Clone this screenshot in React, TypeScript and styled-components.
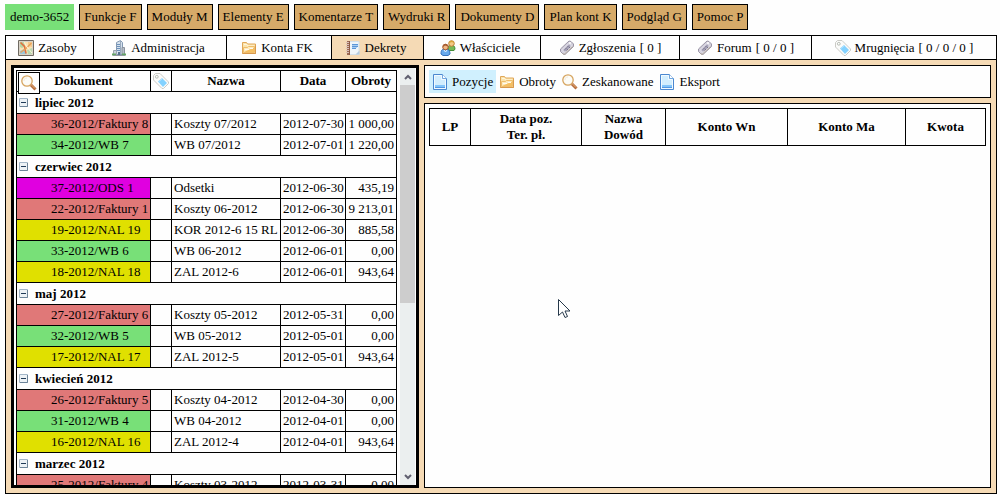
import React from 'react';
import styled, { createGlobalStyle, css } from 'styled-components';

const color = {
  sand: '#f5dab5',
  tan: '#d6aa69',
  green: '#78e078',
  red: '#e07878',
  yellow: '#e0e000',
  magenta: '#e000e0',
  active: '#d0f0fe',
};

const Global = createGlobalStyle`
  *, *::before, *::after { box-sizing: border-box; }
  body {
    margin: 0;
    background: #fefefe;
    color: #000;
    font: 13px/16px "Liberation Serif", "Times New Roman", serif;
  }
  button { font: inherit; color: inherit; cursor: pointer; }
  table { border-collapse: collapse; table-layout: fixed; font: inherit; }
`;

const Page = styled.div`
  position: relative;
  display: flex;
  flex-direction: column;
  gap: 5px;
  height: 100vh;
  padding: 4px 3px 6px 5px;
`;

const MenuBar = styled.nav`
  display: flex;
  flex: none;
  gap: 5px;
`;

const MenuButton = styled.button<{ $account?: boolean }>`
  height: 26px;
  padding: 0 4px;
  white-space: nowrap;
  border: 1px solid ${(p) => (p.$account ? color.green : '#000')};
  background: ${(p) => (p.$account ? color.green : color.tan)};
`;

const Workspace = styled.main`
  display: flex;
  flex: 1;
  flex-direction: column;
  min-height: 0;
  border: 1px solid #000;
  background: ${color.sand};
`;

const TabBar = styled.nav`
  display: grid;
  flex: none;
  grid-template-columns: 88fr 133fr 105fr 92fr 117fr 139fr 132fr 184fr;
  border-bottom: 1px solid #000;
`;

const Tab = styled.button<{ $active?: boolean; $counted?: boolean }>`
  display: flex;
  align-items: center;
  justify-content: center;
  gap: 4px;
  height: 23px;
  padding: 0 ${(p) => (p.$counted ? 0 : 4)}px 0 0;
  border: 0;
  border-right: 1px solid #000;
  white-space: nowrap;
  background: ${(p) => (p.$active ? color.sand : '#fefefe')};
  &:last-child { border-right: 0; }
`;

const Panels = styled.div`
  display: flex;
  flex: 1;
  gap: 5px;
  min-height: 0;
  padding: 5px;
`;

const DocumentPanel = styled.section`
  display: flex;
  flex: none;
  gap: 3px;
  overflow: hidden;
  padding: 0 1px 0 2px;
  border: 3px solid #000;
  background: #fefefe;
`;

const DocumentList = styled.div`
  overflow: hidden;
  padding-top: 2px;
`;

const DocumentTable = styled.table`
  width: 381px;
  border: 1px solid #000;
`;

const cell = css`
  height: 21px;
  padding: 0 2px;
  border: 1px solid #000;
  white-space: nowrap;
`;

const HeadCell = styled.th`
  ${cell}
  position: relative;
  padding: 0;
  svg { display: block; margin: 0 auto; }
`;

const GroupCell = styled.th`
  ${cell}
  height: 22px;
  text-align: left;
`;

const GroupToggle = styled.button`
  display: flex;
  align-items: center;
  gap: 7px;
  padding: 0;
  border: 0;
  background: none;
  font-weight: bold;
`;

const Cell = styled.td<{ $right?: boolean }>`
  ${cell}
  text-align: ${(p) => (p.$right ? 'right' : 'left')};
`;

const DocumentCell = styled.td<{ $fill: string }>`
  ${cell}
  padding: 0 0 0 34px;
  background: ${(p) => p.$fill};
`;

const SearchButton = styled.button`
  position: absolute;
  top: 1px;
  left: 1px;
  z-index: 1;
  width: 22px;
  height: 22px;
  padding: 0;
  border: 1px solid #000;
  background: #fefefe;
`;

const Scrollbar = styled.div`
  display: flex;
  flex-direction: column;
  width: 15px;
  background: #ebefef;
`;

const ScrollButton = styled.button`
  display: flex;
  flex: none;
  align-items: center;
  justify-content: center;
  height: 17px;
  padding: 0;
  border: 0;
  background: none;
`;

const ScrollTrack = styled.div`
  flex: 1;
`;

const ScrollThumb = styled.div`
  height: 57%;
  background: #cdcdcd;
`;

const DetailColumn = styled.div`
  display: flex;
  flex: 1;
  flex-direction: column;
  gap: 5px;
  min-width: 0;
`;

const Box = styled.section<{ $grow?: boolean }>`
  flex: ${(p) => (p.$grow ? '1' : 'none')};
  min-height: 0;
  padding: 4px;
  border: 1px solid #000;
  background: #fefefe;
`;

const Tools = styled.div`
  display: flex;
`;

const ToolButton = styled.button<{ $active?: boolean }>`
  display: flex;
  align-items: center;
  gap: 4px;
  height: 23px;
  padding: 0 3px;
  border: 0;
  background: ${(p) => (p.$active ? color.active : 'none')};
`;

const PositionTable = styled.table`
  width: 100%;
`;

const PositionHead = styled.th`
  height: 37px;
  padding: 0;
  border: 1px solid #000;
`;

const Pointer = styled.svg`
  position: absolute;
  top: 298px;
  left: 558px;
  pointer-events: none;
`;

const Svg = ({ children }: { children: React.ReactNode }) => (
  <svg width="16" height="16" viewBox="0 0 16 16" fill="none" aria-hidden="true">
    {children}
  </svg>
);

const MapIcon = () => (
  <Svg>
    <path d="M.5.5h15v15H.5z" fill="#fbe3b4" stroke="#6f6a62" />
    <path d="M1.500 1.500h13v13h-13z" stroke="#d8d2c6" />
    <path d="M2 2h4l1 4-3 2-2-1z" fill="#b5d6a6" />
    <path d="M10 2h4v5l-4-1z" fill="#f6c98c" />
    <path d="M2 11l4-2 3 5H2z" fill="#9cc8dc" />
    <path d="M9 10l5-2v6h-4z" fill="#b9d9b0" />
    <path d="M2.500 2.500l4 4 1.500 7" stroke="#e0703c" strokeWidth="1.600" />
    <path d="M13.500 3L8 8.500l-5.500 4" stroke="#e8a25a" strokeWidth="1.400" />
    <path d="M6 2l3 5 5 6" stroke="#fff4d6" />
  </Svg>
);

const BuildingIcon = () => (
  <Svg>
    <path d="M5.500 14.500V2.500l4-2 2 2v12z" fill="#d5e1ed" stroke="#8399b3" />
    <path d="M9.500 1v13" stroke="#9aaabd" />
    <path d="M6 4.500h3M6 6.500h3M6 8.500h3M6 10.500h3" stroke="#6c91bb" />
    <path d="M11 7.500h2.500v7H11z" fill="#b5bdc7" stroke="#8b929e" />
    <path d="M2.500 10.500h3v4h-3z" fill="#cad2dc" stroke="#9ba5af" />
    <path d="M7 12h2v3H7z" fill="#57718e" />
    <path d="M1 14.500h4M11 14.500h4" stroke="#64a565" strokeWidth="2" />
    <path d="M2 15.500h12" stroke="#929ba0" />
  </Svg>
);

const FolderIcon = () => (
  <Svg>
    <path d="M1.500 13.500v-11h4l1 1.500h8v9.500z" fill="#fbe4ad" stroke="#e0a758" />
    <path d="M3 4.500h3l1 1.500h6" stroke="#fff6dc" />
    <path d="M2.500 12.500v-5h4l1-1h6v6z" fill="#fdeabd" stroke="#efbd6c" />
    <path d="M3 12l10-4.500V12z" fill="#f5bf62" />
    <path d="M4 9.500h4M9 8.500h3" stroke="#fffaf0" />
    <path d="M1.500 13.500h13v-8" stroke="#d9994c" />
  </Svg>
);

const NotebookIcon = () => (
  <Svg>
    <path d="M4 1.500h10v13H4z" fill="#eef5fa" stroke="#d3e0ea" />
    <path d="M2 1h2v14H2z" fill="#9c6a56" />
    <path d="M1 2.500h3M1 4.500h3M1 6.500h3M1 8.500h3M1 10.500h3M1 12.500h3" stroke="#d9c2b8" />
    <path d="M4.500 1v14" stroke="#8f5c48" />
    <path d="M7 4.500h6M7 6.500h6M7 8.500h4" stroke="#5b96d8" />
    <path d="M7 5.500h6M7 7.500h5" stroke="#a9cdf0" />
    <path d="M10.500 14.500l4-4v4z" fill="#b4cbe0" />
  </Svg>
);

const PeopleIcon = () => (
  <Svg>
    <path d="M8 9c0-3 1-4 3-4s4 1 4 4l-1 1.500H9z" fill="#77b957" stroke="#438c37" />
    <circle cx="11.500" cy="3.500" r="2.800" fill="#f4c986" stroke="#be8035" />
    <path d="M9 3c0-3 5-3 5 0l-2-1z" fill="#d8a537" />
    <path d="M1 14c0-4 1-5 4.500-5S10 11 10 14l-2 1.500H3z" fill="#68a9ec" stroke="#3671bd" />
    <circle cx="5.500" cy="7" r="2.800" fill="#f0b783" stroke="#a95f31" />
    <path d="M3 7c-.5-4 5-4 5-.5L5 5.500z" fill="#a35a31" />
    <path d="M4 10l1.500 2L7 10" stroke="#e3f1ff" />
  </Svg>
);

const TicketIcon = () => (
  <Svg>
    <path d="M1.500 9l8.500-8 2 .5 2.500 2.500v2.500l-8.500 8-2-.5-2.500-2.500z" fill="#d3d0dc" stroke="#9a95a6" />
    <path d="M3.500 10l6.500-6.500 2.500 2.500L6 12.500z" fill="#aaa6ba" stroke="#e9e8f0" />
    <path d="M6 9.500l4-4M7.500 10.500l4-4" stroke="#75718a" strokeDasharray="2 1" />
    <path d="M3.500 13.500l1.500 1 8.500-8" stroke="#b9aea0" />
    <circle cx="11" cy="3" r="1" fill="#fff" />
  </Svg>
);

const TagIcon = () => (
  <Svg>
    <path d="M.5 2.500l2-2h4.500l8.500 8.500v1.500l-5 5H9L.5 7z" fill="#fbfbfa" stroke="#cbcbc6" />
    <circle cx="3.800" cy="3.800" r="1.400" fill="#fff" stroke="#b5bab2" />
    <path d="M5 8.500l4-3.500 5 5-4 4z" fill="#84d2ff" />
    <path d="M6 8.500l3-2.500" stroke="#b4e4ff" />
  </Svg>
);

const SearchIcon = () => (
  <Svg>
    <circle cx="6" cy="6" r="5.200" fill="#fcfcf8" stroke="#d6a45f" strokeWidth="1.300" />
    <path d="M3 6c0-2 1-3 3-3" stroke="#f2e8d8" />
    <path d="M10 10l4.500 4.500" stroke="#b56b3d" strokeWidth="3" />
    <path d="M10.500 10l3.500 3.500" stroke="#e7b578" />
  </Svg>
);

const PageIcon = () => (
  <Svg>
    <path d="M1.500.5h9l4 4v11h-13z" fill="#d2eefe" stroke="#4b88d0" />
    <path d="M2.500 1.500h7v4h4v9h-11z" stroke="#f1faff" />
    <path d="M10.500.5v4h4" fill="#fff" stroke="#73a7df" />
    <path d="M3 11h10v2H3z" fill="#83c5fb" />
    <path d="M3 13.500h10" stroke="#5498e2" />
  </Svg>
);

const CollapseIcon = () => (
  <svg width="9" height="9" viewBox="0 0 9 9" fill="none" aria-hidden="true">
    <path d="M.5.5h8v8h-8z" fill="#edf2f6" stroke="#a3b6c8" />
    <path d="M8.500 1v7.500H1" stroke="#6d8499" />
    <path d="M2 4.500h5" stroke="#203b58" />
  </svg>
);

const Chevron = ({ down }: { down?: boolean }) => (
  <svg width="8" height="6" viewBox="0 0 8 6" fill="none" aria-hidden="true">
    <path d={down ? 'M1 1l3 3 3-3' : 'M1 5l3-3 3 3'} stroke="#606070" strokeWidth="2" />
  </svg>
);

const menu = [
  'Funkcje F', 'Moduły M', 'Elementy E', 'Komentarze T', 'Wydruki R',
  'Dokumenty D', 'Plan kont K', 'Podgląd G', 'Pomoc P',
];

const tabs = [
  { label: 'Zasoby', Icon: MapIcon },
  { label: 'Administracja', Icon: BuildingIcon },
  { label: 'Konta FK', Icon: FolderIcon },
  { label: 'Dekrety', Icon: NotebookIcon, active: true },
  { label: 'Właściciele', Icon: PeopleIcon },
  { label: 'Zgłoszenia', Icon: TicketIcon, count: '[ 0 ]' },
  { label: 'Forum', Icon: TicketIcon, count: '[ 0 / 0 ]' },
  { label: 'Mrugnięcia', Icon: TagIcon, count: '[ 0 / 0 / 0 ]' },
];

const tools = [
  { label: 'Pozycje', Icon: PageIcon, active: true },
  { label: 'Obroty', Icon: FolderIcon },
  { label: 'Zeskanowane', Icon: SearchIcon },
  { label: 'Eksport', Icon: PageIcon },
];

type Row = [string, string, string, string];

const groups: { month: string; rows: Row[] }[] = [
  {
    month: 'lipiec 2012',
    rows: [
      ['36-2012/Faktury 8', 'Koszty 07/2012', '2012-07-30', '1 000,00'],
      ['34-2012/WB 7', 'WB 07/2012', '2012-07-01', '1 220,00'],
    ],
  },
  {
    month: 'czerwiec 2012',
    rows: [
      ['37-2012/ODS 1', 'Odsetki', '2012-06-30', '435,19'],
      ['22-2012/Faktury 1', 'Koszty 06-2012', '2012-06-30', '9 213,01'],
      ['19-2012/NAL 19', 'KOR 2012-6 15 RL', '2012-06-30', '885,58'],
      ['33-2012/WB 6', 'WB 06-2012', '2012-06-01', '0,00'],
      ['18-2012/NAL 18', 'ZAL 2012-6', '2012-06-01', '943,64'],
    ],
  },
  {
    month: 'maj 2012',
    rows: [
      ['27-2012/Faktury 6', 'Koszty 05-2012', '2012-05-31', '0,00'],
      ['32-2012/WB 5', 'WB 05-2012', '2012-05-01', '0,00'],
      ['17-2012/NAL 17', 'ZAL 2012-5', '2012-05-01', '943,64'],
    ],
  },
  {
    month: 'kwiecień 2012',
    rows: [
      ['26-2012/Faktury 5', 'Koszty 04-2012', '2012-04-30', '0,00'],
      ['31-2012/WB 4', 'WB 04-2012', '2012-04-01', '0,00'],
      ['16-2012/NAL 16', 'ZAL 2012-4', '2012-04-01', '943,64'],
    ],
  },
  {
    month: 'marzec 2012',
    rows: [['25-2012/Faktury 4', 'Koszty 03-2012', '2012-03-31', '0,00']],
  },
];

const fillFor = (doc: string) => {
  if (doc.includes('Faktury')) return color.red;
  if (doc.includes('WB')) return color.green;
  if (doc.includes('NAL')) return color.yellow;
  return color.magenta;
};

export default function App() {
  return (
    <Page>
      <Global />
      <MenuBar>
        <MenuButton $account>demo-3652</MenuButton>
        {menu.map((label) => (
          <MenuButton key={label}>{label}</MenuButton>
        ))}
      </MenuBar>
      <Workspace>
        <TabBar>
          {tabs.map(({ label, Icon, active, count }) => (
            <Tab key={label} $active={active} $counted={!!count}>
              <Icon />
              <span>{label}</span>
              {count && <span>{count}</span>}
            </Tab>
          ))}
        </TabBar>
        <Panels>
          <DocumentPanel>
            <DocumentList>
              <DocumentTable>
                <colgroup>
                  {[134, 21, 109, 65, 51].map((w) => (
                    <col key={w} width={w} />
                  ))}
                </colgroup>
                <thead>
                  <tr>
                    <HeadCell>
                      <SearchButton aria-label="Szukaj"><SearchIcon /></SearchButton>
                      Dokument
                    </HeadCell>
                    <HeadCell><TagIcon /></HeadCell>
                    <HeadCell>Nazwa</HeadCell>
                    <HeadCell>Data</HeadCell>
                    <HeadCell>Obroty</HeadCell>
                  </tr>
                </thead>
                {groups.map(({ month, rows }) => (
                  <tbody key={month}>
                    <tr>
                      <GroupCell colSpan={5}>
                        <GroupToggle><CollapseIcon />{month}</GroupToggle>
                      </GroupCell>
                    </tr>
                    {rows.map(([doc, name, date, amount]) => (
                      <tr key={doc}>
                        <DocumentCell $fill={fillFor(doc)}>{doc}</DocumentCell>
                        <Cell />
                        <Cell>{name}</Cell>
                        <Cell>{date}</Cell>
                        <Cell $right>{amount}</Cell>
                      </tr>
                    ))}
                  </tbody>
                ))}
              </DocumentTable>
            </DocumentList>
            <Scrollbar>
              <ScrollButton aria-label="W górę"><Chevron /></ScrollButton>
              <ScrollTrack><ScrollThumb /></ScrollTrack>
              <ScrollButton aria-label="W dół"><Chevron down /></ScrollButton>
            </Scrollbar>
          </DocumentPanel>
          <DetailColumn>
            <Box>
              <Tools>
                {tools.map(({ label, Icon, active }) => (
                  <ToolButton key={label} $active={active}><Icon />{label}</ToolButton>
                ))}
              </Tools>
            </Box>
            <Box $grow>
              <PositionTable>
                <colgroup>
                  {[41, 111, 84, 122, 118, 80].map((w) => (
                    <col key={w} width={w} />
                  ))}
                </colgroup>
                <thead>
                  <tr>
                    <PositionHead>LP</PositionHead>
                    <PositionHead>Data poz.<br />Ter. pł.</PositionHead>
                    <PositionHead>Nazwa<br />Dowód</PositionHead>
                    <PositionHead>Konto Wn</PositionHead>
                    <PositionHead>Konto Ma</PositionHead>
                    <PositionHead>Kwota</PositionHead>
                  </tr>
                </thead>
              </PositionTable>
            </Box>
          </DetailColumn>
        </Panels>
      </Workspace>
      <Pointer width="13" height="21" viewBox="0 0 13 21" aria-hidden="true">
        <path d="M.5 1.500v16l4-3.500 2.500 5.500 2.500-1-2.500-5.500h5z" fill="#fff" stroke="#26384a" />
      </Pointer>
    </Page>
  );
}
